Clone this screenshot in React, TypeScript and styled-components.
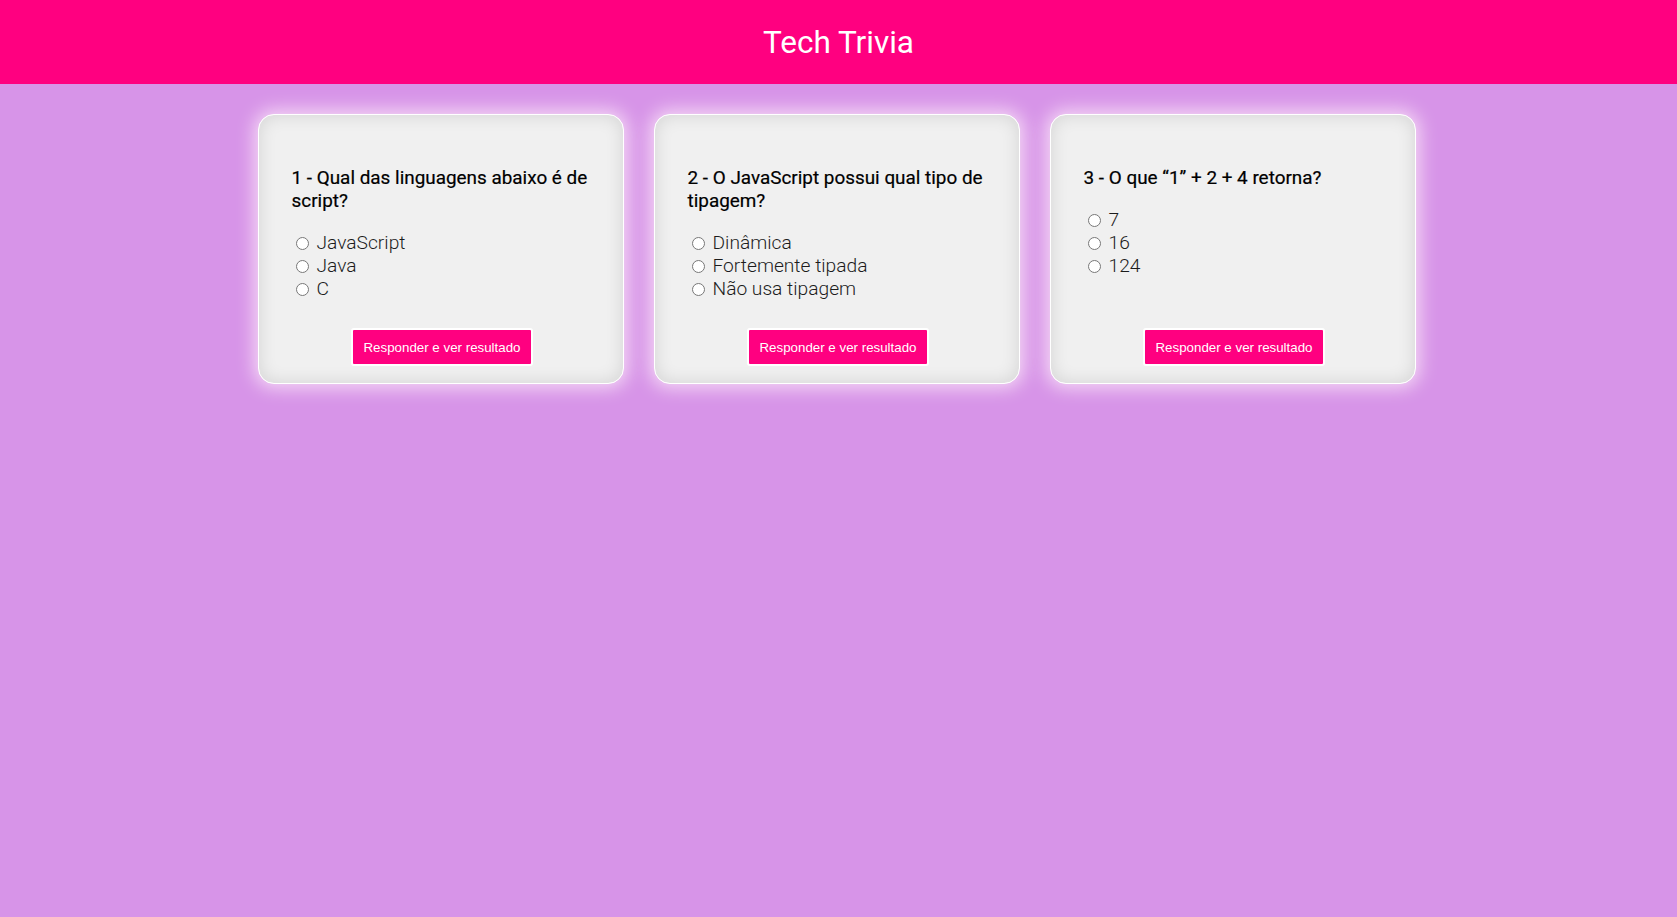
import React from "react";
import styled, { createGlobalStyle } from "styled-components";

const GlobalStyle = createGlobalStyle`
  html, body {
    margin: 0;
    padding: 0;
    min-height: 100%;
  }
  body {
    background: #d794e8;
    font-family: Roboto, "Open Sans", Arial, sans-serif;
    min-height: 917px;
  }
`;

const Header = styled.header`
  height: 84px;
  background: #ff0080;
  display: flex;
  align-items: center;
  justify-content: center;
`;

const Title = styled.h1`
  margin: 0;
  color: #fff;
  font-family: Roboto, Arial, sans-serif;
  font-weight: 400;
  font-size: 31.5px;
`;

const Board = styled.main`
  display: grid;
  grid-template-columns: repeat(3, 366px);
  gap: 30px;
  justify-content: center;
  padding: 30px 4px 0 0;
`;

const Card = styled.form`
  display: flex;
  flex-direction: column;
  height: 270px;
  box-sizing: border-box;
  padding: 51px 30px 17px 33px;
  background: #f0f0f0;
  border: 1px solid #fff;
  border-radius: 16px;
  box-shadow: inset 0 0 18px rgba(0, 0, 0, 0.12), 0 0 18px 4px rgba(255, 240, 250, 0.75);
`;

const Question = styled.h3`
  margin: 0 0 19px;
  font-size: 18.9px;
  line-height: 23px;
  font-weight: 400;
  color: #000;
  -webkit-text-stroke: 0.2px #000;
`;

const Options = styled.div`
  display: flex;
  flex-direction: column;
`;

const Option = styled.label`
  font-size: 19.2px;
  line-height: 23px;
  font-weight: 300;
  color: #1c1c1c;
  display: flex;
  align-items: center;

  input {
    margin: 1px 8px 0 4px;
    width: 13px;
    height: 13px;
  }
`;

const Submit = styled.button`
  margin: auto auto 0;
  background: #ff0080;
  color: #fff;
  border: 2px solid #fff;
  border-radius: 3px;
  height: 38px;
  padding: 0 10px;
  font-family: Arial, "Liberation Sans", sans-serif;
  font-size: 13.33px;
  cursor: pointer;
`;

const questions = [
  {
    text: "1 - Qual das linguagens abaixo é de script?",
    options: ["JavaScript", "Java", "C"],
  },
  {
    text: "2 - O JavaScript possui qual tipo de tipagem?",
    options: ["Dinâmica", "Fortemente tipada", "Não usa tipagem"],
  },
  {
    text: "3 - O que \u201c1\u201d + 2 + 4 retorna?",
    options: ["7", "16", "124"],
  },
];

export default function App() {
  return (
    <>
      <GlobalStyle />
      <Header>
        <Title>Tech Trivia</Title>
      </Header>
      <Board>
        {questions.map((q, i) => (
          <Card key={i} onSubmit={(e) => e.preventDefault()}>
            <Question>{q.text}</Question>
            <Options>
              {q.options.map((o) => (
                <Option key={o}>
                  <input type="radio" name={"q" + i} value={o} />
                  {o}
                </Option>
              ))}
            </Options>
            <Submit type="submit">Responder e ver resultado</Submit>
          </Card>
        ))}
      </Board>
    </>
  );
}
